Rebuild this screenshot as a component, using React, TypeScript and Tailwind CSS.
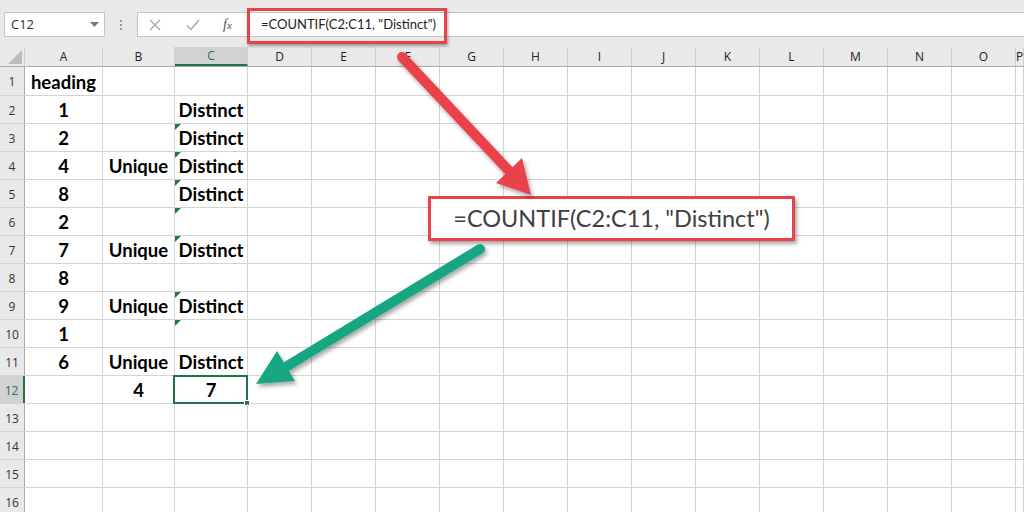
import React from 'react'

const cols = ['A', 'B', 'C', 'D', 'E', 'F', 'G', 'H', 'I', 'J', 'K', 'L', 'M', 'N', 'O', 'P']
const widths: Record<string, string> = {
  A: 'w-[78px]',
  B: 'w-[72px]',
  C: 'w-[73px]',
}

type Row = { a?: string; b?: string; c?: string; tri?: boolean }

const rows: Row[] = [
  { a: 'heading' },
  { a: '1', c: 'Distinct' },
  { a: '2', c: 'Distinct', tri: true },
  { a: '4', b: 'Unique', c: 'Distinct', tri: true },
  { a: '8', c: 'Distinct', tri: true },
  { a: '2', tri: true },
  { a: '7', b: 'Unique', c: 'Distinct', tri: true },
  { a: '8' },
  { a: '9', b: 'Unique', c: 'Distinct', tri: true },
  { a: '1', tri: true },
  { a: '6', b: 'Unique', c: 'Distinct' },
  { b: '4', c: '7' },
  {},
  {},
  {},
  {},
]

function colWidth(c: string) {
  if (c === 'P') return 'flex-1'
  return widths[c] ?? 'w-[64px]'
}

function Toolbar() {
  return (
    <div className="relative h-[47px] bg-[#e9e9e9] flex items-start pt-[12px] pl-[4px]">
      <div className="w-[101px] h-[25px] bg-white border border-[#c6c6c6] flex items-center justify-between pl-[6px] pr-[5px]">
        <span className="text-[13px] text-[#333] font-['Open_Sans',sans-serif]">C12</span>
        <svg width="9" height="5" viewBox="0 0 9 5">
          <path d="M0 0 L9 0 L4.5 5 Z" fill="#777" />
        </svg>
      </div>
      <div className="w-[32px] h-[25px] flex flex-col items-center justify-center gap-[2px]">
        <span className="w-[2px] h-[2px] bg-[#9a9a9a]" />
        <span className="w-[2px] h-[2px] bg-[#9a9a9a]" />
        <span className="w-[2px] h-[2px] bg-[#9a9a9a]" />
      </div>
      <div className="flex-1 h-[25px] bg-white border border-[#c6c6c6] border-r-0 flex items-center">
        <div className="w-[110px] h-full flex items-center text-[#a6a6a6]">
          <svg className="ml-[11px]" width="12" height="12" viewBox="0 0 12 12">
            <path d="M1 1 L11 11 M11 1 L1 11" stroke="#a6a6a6" strokeWidth="1.3" />
          </svg>
          <svg className="ml-[25px]" width="14" height="12" viewBox="0 0 14 12">
            <path d="M1 6.5 L5 10.5 L13 1" stroke="#a6a6a6" strokeWidth="1.4" fill="none" />
          </svg>
          <span className="ml-[23px] italic text-[14px] text-[#555] font-['Liberation_Serif',serif]">
            f<span className="text-[11px]">x</span>
          </span>
        </div>
        <span className="ml-[13px] text-[13px] text-[#222] font-['Lato',sans-serif]">
          =COUNTIF(C2:C11, "Distinct")
        </span>
      </div>
      <div className="absolute left-[247px] top-[8px] w-[200px] h-[36px] border-[3px] border-[#e8434a] shadow-[1px_2px_3px_rgba(0,0,0,0.35)]" />
    </div>
  )
}

function Header() {
  return (
    <div className="flex h-[20px] bg-[#e9e9e9] border-b border-[#ababab] text-[12px] text-[#222] font-['Open_Sans',sans-serif]">
      <div className="w-[25px] shrink-0 border-r border-[#d0d0d0] flex items-end justify-end p-[2px]">
        <svg width="14" height="14" viewBox="0 0 14 14">
          <path d="M14 0 L14 14 L0 14 Z" fill="#bcbcbc" />
        </svg>
      </div>
      {cols.map((c) => (
        <div
          key={c}
          className={`${colWidth(c)} shrink-0 border-r border-[#d0d0d0] flex items-center justify-center ${
            c === 'C' ? 'bg-[#d2d2d2] text-[#217346] border-b-2 border-b-[#217346]' : ''
          }`}
        >
          {c}
        </div>
      ))}
    </div>
  )
}

function Cell({ col, value, tri, selected }: { col: string; value?: string; tri?: boolean; selected?: boolean }) {
  return (
    <div className={`${colWidth(col)} shrink-0 relative border-r border-[#d4d4d4] flex items-center justify-center pt-[2px]`}>
      {tri && (
        <svg className="absolute left-0 top-0" width="6" height="6" viewBox="0 0 6 6">
          <path d="M0 0 L6 0 L0 6 Z" fill="#1e7e34" />
        </svg>
      )}
      {value && <span className="text-[18.5px] font-bold text-black leading-none">{value}</span>}
      {selected && (
        <>
          <div className="absolute -left-[2px] -top-[1px] -right-[1px] -bottom-[1px] border-2 border-[#217346]" />
          <div className="absolute -right-[3px] -bottom-[3px] w-[6px] h-[6px] bg-[#217346] border border-white" />
        </>
      )}
    </div>
  )
}

function Grid() {
  return (
    <div className="font-['Lato',sans-serif]">
      {rows.map((r, i) => {
        const n = i + 1
        const sel = n === 12
        return (
          <div key={n} className={`flex ${n === 1 ? 'h-[29px]' : 'h-[28px]'} border-b border-[#d4d4d4]`}>
            <div
              className={`w-[25px] shrink-0 flex items-center justify-center pt-[2px] text-[12px] font-['Open_Sans',sans-serif] border-r ${
                sel
                  ? 'bg-[#d2d2d2] text-[#217346] border-r-2 border-r-[#217346]'
                  : 'bg-[#e9e9e9] text-[#333] border-r-[#ababab]'
              }`}
            >
              {n}
            </div>
            {cols.map((c) => {
              const v = c === 'A' ? r.a : c === 'B' ? r.b : c === 'C' ? r.c : undefined
              return <Cell key={c} col={c} value={v} tri={c === 'C' && r.tri} selected={sel && c === 'C'} />
            })}
          </div>
        )
      })}
    </div>
  )
}

function Arrows() {
  return (
    <svg className="absolute inset-0 pointer-events-none" width="1024" height="512" viewBox="0 0 1024 512">
      <defs>
        <filter id="sh" x="-20%" y="-20%" width="140%" height="140%">
          <feDropShadow dx="2" dy="3" stdDeviation="2" floodColor="#000" floodOpacity="0.35" />
        </filter>
      </defs>
      <g filter="url(#sh)">
        <line x1="402" y1="57" x2="511" y2="173" stroke="#e9434b" strokeWidth="10" strokeLinecap="round" />
        <path d="M531 195 L496 183 L522 158 Z" fill="#e9434b" />
      </g>
      <g filter="url(#sh)">
        <line x1="480" y1="249" x2="284" y2="368" stroke="#17a682" strokeWidth="10" strokeLinecap="round" />
        <path d="M256 384 L295 381 L277 351 Z" fill="#17a682" />
      </g>
    </svg>
  )
}

export default function App() {
  return (
    <div className="relative w-[1024px] h-[512px] overflow-hidden bg-white">
      <Toolbar />
      <Header />
      <Grid />
      <div className="absolute left-[428px] top-[196px] w-[367px] h-[45px] bg-white border-[3px] border-[#e8434a] shadow-[2px_3px_4px_rgba(0,0,0,0.35)] flex items-center justify-center">
        <span className="text-[23.5px] text-[#404040] font-['Lato',sans-serif]">=COUNTIF(C2:C11, "Distinct")</span>
      </div>
      <Arrows />
    </div>
  )
}
